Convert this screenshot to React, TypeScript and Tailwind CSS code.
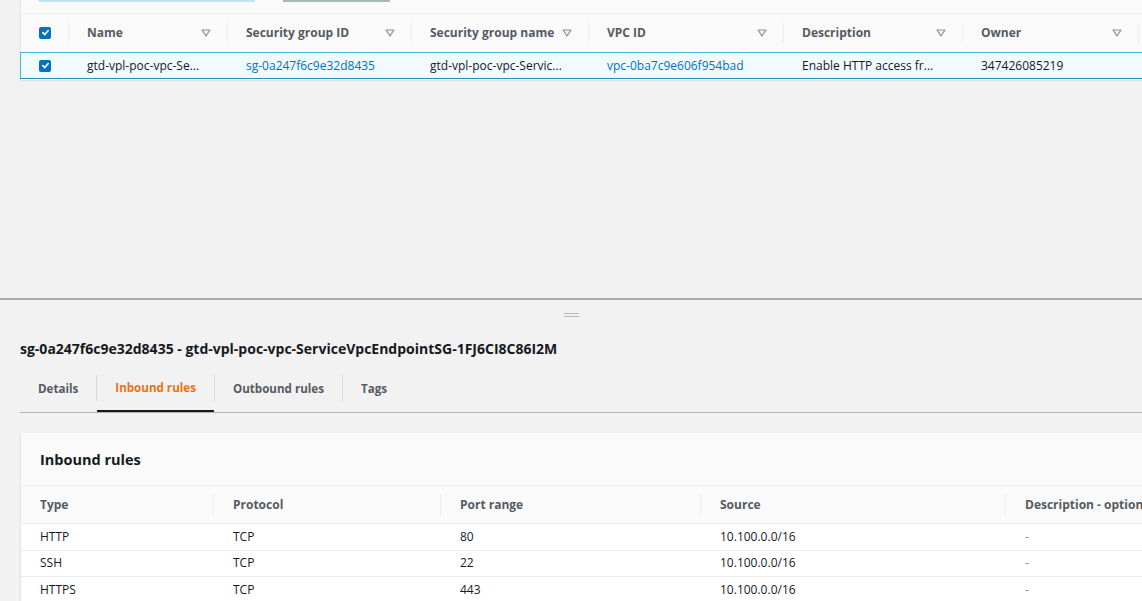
import React from "react";

const font = { fontFamily: '"Open Sans", "Noto Sans", Arial, sans-serif' };

function FilterIcon() {
  return (
    <svg width="10" height="8" viewBox="0 0 10 8" className="shrink-0">
      <polygon points="1,1 9,1 5,7" fill="#eef0f0" stroke="#879596" strokeWidth="1.2" strokeLinejoin="round" />
    </svg>
  );
}

function Checkbox() {
  return (
    <div className="w-[12px] h-[12px] rounded-[2px] bg-[#0073bb] flex items-center justify-center">
      <svg width="9" height="9" viewBox="0 0 10 10">
        <path d="M2 5.2 L4.2 7.3 L8 2.8" fill="none" stroke="#fff" strokeWidth="1.8" strokeLinecap="round" strokeLinejoin="round" />
      </svg>
    </div>
  );
}

const topCols = [
  { label: "Name", w: "w-[159px]", value: "gtd-vpl-poc-vpc-Se...", link: false },
  { label: "Security group ID", w: "w-[184px]", value: "sg-0a247f6c9e32d8435", link: true },
  { label: "Security group name", w: "w-[177px]", value: "gtd-vpl-poc-vpc-Servic...", link: false },
  { label: "VPC ID", w: "w-[195px]", value: "vpc-0ba7c9e606f954bad", link: true },
  { label: "Description", w: "w-[179px]", value: "Enable HTTP access fr...", link: false },
  { label: "Owner", w: "w-[176px]", value: "347426085219", link: false },
];

const ruleCols = [
  { label: "Type", w: "w-[193px]" },
  { label: "Protocol", w: "w-[227px]" },
  { label: "Port range", w: "w-[260px]" },
  { label: "Source", w: "w-[305px]" },
  { label: "Description - optional", w: "w-[240px]" },
];

const rules = [
  ["HTTP", "TCP", "80", "10.100.0.0/16", "-"],
  ["SSH", "TCP", "22", "10.100.0.0/16", "-"],
  ["HTTPS", "TCP", "443", "10.100.0.0/16", "-"],
];

const tabs = ["Details", "Inbound rules", "Outbound rules", "Tags"];

export default function App() {
  return (
    <div style={font} className="w-[1142px] h-[601px] overflow-hidden bg-[#f2f2f2] flex flex-col text-[12px] text-[#16191f]">
      {/* top table panel */}
      <div className="ml-[20px] w-[1140px] h-[80px] bg-[#fafafa] border-l border-[#e4e6e6] shadow-[0_1px_1px_rgba(0,0,0,0.08)] shrink-0 flex flex-col">
        <div className="h-[14px] flex items-start border-b border-[#eaeded] shrink-0">
          <div className="ml-[18px] w-[216px] h-[2px] bg-[#bfe3f2]" />
          <div className="ml-[28px] w-[107px] h-[2px] bg-[#aab7b8]" />
        </div>
        <div className="h-[37px] flex items-center shrink-0">
          <div className="w-[48px] h-full flex items-center pl-[18px] relative">
            <Checkbox />
            <div className="absolute right-0 top-[9px] h-[20px] w-px bg-[#eaeded]" />
          </div>
          {topCols.map((c) => (
            <div key={c.label} className={`${c.w} h-full flex items-center justify-between pl-[18px] pr-[17px] relative shrink-0`}>
              <span className="font-bold text-[#545b64]">{c.label}</span>
              <FilterIcon />
              <div className="absolute right-0 top-[9px] h-[20px] w-px bg-[#eaeded]" />
            </div>
          ))}
        </div>
        <div className="mt-[1px] h-[27px] flex items-center bg-[#f1faff] border border-[#44b9d6] border-b-[#2d8fb0] shrink-0 -ml-px">
          <div className="w-[48px] flex items-center pl-[18px]">
            <Checkbox />
          </div>
          {topCols.map((c) => (
            <div key={c.label} className={`${c.w} pl-[18px] shrink-0 ${c.link ? "text-[#0073bb]" : "text-[#16191f]"}`}>
              {c.value}
            </div>
          ))}
        </div>
      </div>

      {/* empty area */}
      <div className="flex-1 min-h-0" />

      {/* split panel */}
      <div className="h-[303px] shrink-0 border-t-2 border-[#a9aeae] flex flex-col overflow-hidden">
        <div className="mt-[13px] flex flex-col items-center gap-[2px] shrink-0">
          <div className="w-[15px] h-px bg-[#b5b9b9]" />
          <div className="w-[15px] h-px bg-[#b5b9b9]" />
        </div>
        <div className="mt-[23px] ml-[20px] shrink-0 font-bold text-[14px] leading-[18px] text-[#16191f]">
          sg-0a247f6c9e32d8435 - gtd-vpl-poc-vpc-ServiceVpcEndpointSG-1FJ6CI8C86I2M
        </div>
        <div className="mt-[6px] ml-[20px] h-[49px] shrink-0 flex border-b border-[#aab7b8]">
          {tabs.map((t, i) => (
            <div key={t} className="flex items-center h-full">
              <div
                className={`h-full flex items-center px-[18px] pt-[2px] font-bold text-[11.6px] ${
                  t === "Inbound rules" ? "text-[#ec7211] border-b-2 border-[#16191f]" : "text-[#545b64]"
                }`}
              >
                {t}
              </div>
              {i < tabs.length - 1 && <div className="w-px h-[26px] bg-[#d5dbdb]" />}
            </div>
          ))}
        </div>

        <div className="mt-[20px] ml-[20px] shrink-0 h-[180px] bg-[#fafafa] border-l border-[#e4e6e6] shadow-[0_1px_1px_rgba(0,0,0,0.08)]">
          <div className="h-[52px] flex items-center pl-[19px] pt-[1px] text-[14.5px] font-bold text-[#16191f]">Inbound rules</div>
          <div className="h-[38px] flex items-center border-t border-[#eaeded]">
            {ruleCols.map((c, i) => (
              <div key={c.label} className={`${c.w} h-full flex items-center pl-[19px] relative shrink-0 font-bold text-[#545b64]`}>
                {c.label}
                {i < ruleCols.length - 1 && <div className="absolute right-0 top-[8px] h-[22px] w-px bg-[#eaeded]" />}
              </div>
            ))}
          </div>
          {rules.map((r) => (
            <div key={r[0]} className="h-[26.5px] flex items-center bg-white border-t border-[#eaeded]">
              {r.map((v, i) => (
                <div key={i} className={`${ruleCols[i].w} pl-[19px] shrink-0 ${v === "-" ? "text-[#879596]" : ""}`}>
                  {v}
                </div>
              ))}
            </div>
          ))}
        </div>
      </div>
    </div>
  );
}
